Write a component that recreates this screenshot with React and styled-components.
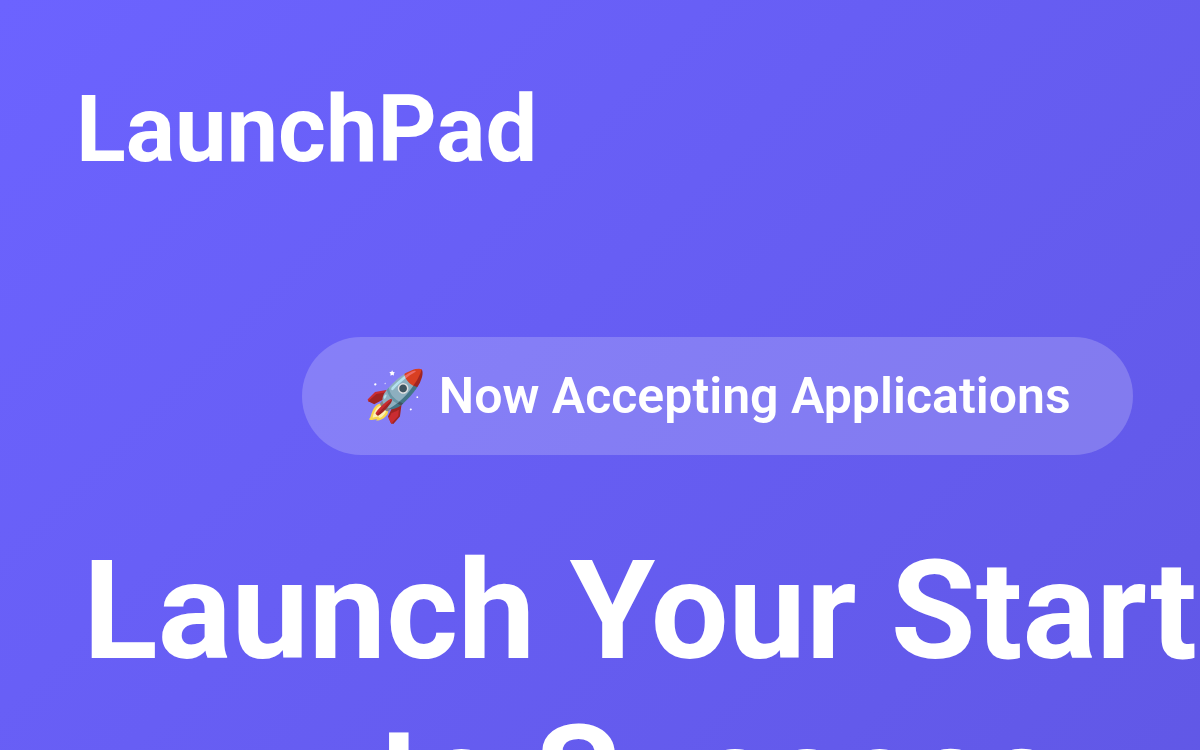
import React from 'react';
import styled, { createGlobalStyle } from 'styled-components';

const GlobalStyles = createGlobalStyle`
  * {
    margin: 0;
    padding: 0;
    box-sizing: border-box;
  }
  body {
    font-family: Roboto, 'Noto Color Emoji', sans-serif;
    color: #fff;
    background-color: #6c63ff;
    overflow: hidden;
  }
`;

const PageStyles = styled.div`
  width: max-content;
  min-width: 100%;
  min-height: 100vh;
  background: linear-gradient(135deg, #6c63ff 0%, #5e55e0 100%);
`;

const Header = styled.header`
  padding: 74px 76px 72px;
`;

const Logo = styled.a`
  display: block;
  font-size: 92px;
  font-weight: 700;
  line-height: 112px;
  color: inherit;
  text-decoration: none;
`;

const Hero = styled.section`
  display: flex;
  flex-direction: column;
  align-items: center;
  padding: 79px 83px 160px;
  text-align: center;
`;

const Badge = styled.span`
  padding: 28px 62px;
  border-radius: 60px;
  font-size: 50px;
  font-weight: 600;
  line-height: 62px;
  background-color: rgba(255, 255, 255, 0.2);
`;

const Title = styled.h1`
  margin-top: 74px;
  font-size: 138px;
  font-weight: 700;
  line-height: 165px;
`;

export default function App() {
  return (
    <>
      <GlobalStyles />
      <PageStyles>
        <Header>
          <Logo href="#">LaunchPad</Logo>
        </Header>
        <Hero>
          <Badge>🚀 Now Accepting Applications</Badge>
          <Title>
            Launch Your Startup
            <br />
            to Success
          </Title>
        </Hero>
      </PageStyles>
    </>
  );
}
